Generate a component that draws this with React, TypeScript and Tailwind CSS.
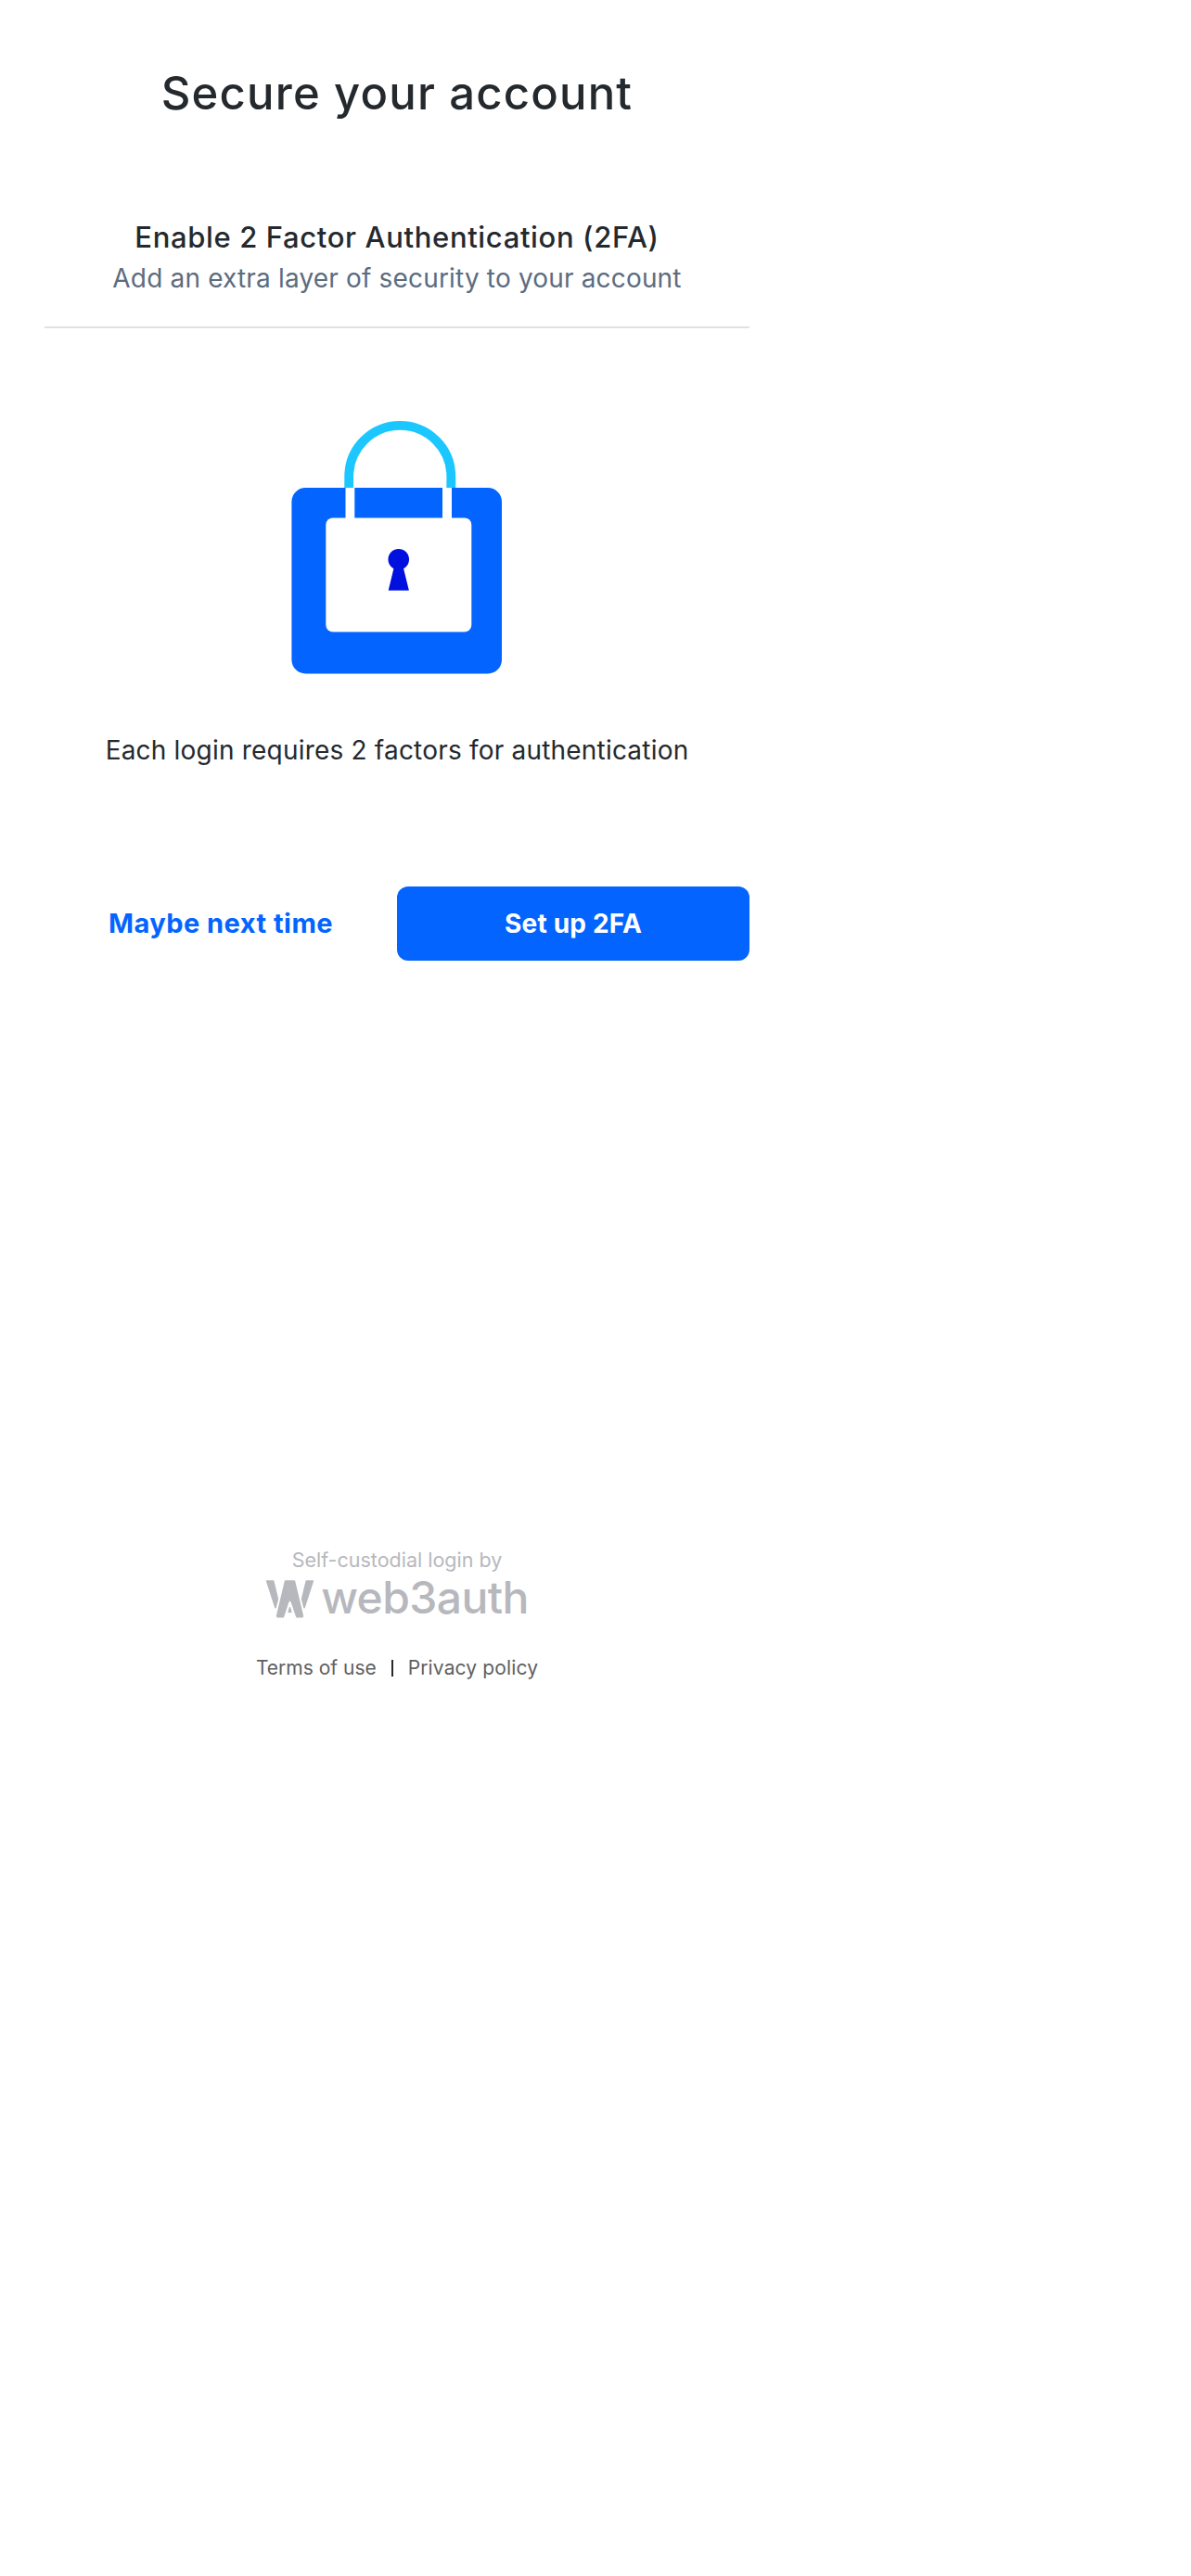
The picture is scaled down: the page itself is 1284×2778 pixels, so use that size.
function LockIllustration() {
  return (
    <svg className="mt-[99px] h-[274px] w-[228px]" viewBox="314 453 228 274" aria-hidden="true">
      <path d="M376.2 526V514A55 55 0 0 1 486.3 514V526" fill="none" stroke="#1cc7ff" strokeWidth="9.8" />
      <rect x="314.4" y="526" width="226.6" height="200.4" rx="15" fill="#0364ff" />
      <rect x="372.5" y="526" width="9.8" height="34" fill="#fff" />
      <rect x="477" y="526" width="10" height="34" fill="#fff" />
      <rect x="351.3" y="558.4" width="157" height="123" rx="7.5" fill="#fff" />
      <path d="M418.7 636.7L424.4 613.2A11.3 11.3 0 1 1 435.1 613.2L440.9 636.7Z" fill="#0010de" />
    </svg>
  );
}

function BrandMark() {
  return (
    <svg className="h-[42px] w-[54px]" viewBox="0 0 162 126" fill="#b7b8bd" stroke="#b7b8bd" strokeWidth="5" strokeLinejoin="round" aria-hidden="true">
      <path d="M5 6H26L40 64L33 92Z" />
      <path d="M154 6H133L119 64L126 92Z" />
      <path d="M65 6H94L121 119Q121 122 119 122H102L86 76Q79.500 60 73 76L58 122H41Q38 122 38 119Z" />
      <path d="M79.500 90L84.500 107H74.500Z" strokeWidth="3" />
    </svg>
  );
}

export default function App() {
  return (
    <div className="min-h-[2778px] bg-white font-['Inter',sans-serif]">
      <main className="flex w-[856px] flex-col items-center px-12 pt-[65px] text-[#24292e]">
        <h1 className="text-[49px] leading-[72px] font-medium tracking-[1.18px]">Secure your account</h1>

        <header className="mt-[96px] flex w-full flex-col items-center border-b-2 border-[#dfe1e2] pb-[31px] whitespace-nowrap">
          <h2 className="text-[31px] leading-[46px] font-medium tracking-[0.64px]">Enable 2 Factor Authentication (2FA)</h2>
          <p className="text-[28px] leading-[42px] tracking-[0.17px] text-[#5c6c7f]">Add an extra layer of security to your account</p>
        </header>

        <LockIllustration />
        <p className="mt-[61px] text-[28px] leading-[42px] tracking-[0.2px] whitespace-nowrap">Each login requires 2 factors for authentication</p>

        <div className="mt-[126px] grid w-full grid-cols-2 text-[28px] font-bold">
          <button className="h-20 text-[29px] tracking-[0.48px] text-[#0364ff]">Maybe next time</button>
          <button className="h-20 rounded-xl bg-[#0364ff] tracking-[0.2px] text-white">Set up 2FA</button>
        </div>

        <footer className="mt-[630px] flex flex-col items-center">
          <p className="text-[21.5px] leading-8 text-[#b7b8bd]">Self-custodial login by</p>
          <div className="flex items-start gap-[6px] pt-[1px] text-[#b7b8bd]">
            <div className="pt-[4px]"><BrandMark /></div>
            <span className="text-[48px] leading-[48px] font-medium tracking-[-0.6px]">web3auth</span>
          </div>
          <nav className="mt-[36px] flex gap-4 text-[21px] leading-8 text-[#5f6062]">
            <a>Terms of use</a>
            <span className="mt-[7px] h-[18px] w-[2px] bg-[#24292e]" />
            <a className="tracking-[0.13px]">Privacy policy</a>
          </nav>
        </footer>
      </main>
    </div>
  );
}
